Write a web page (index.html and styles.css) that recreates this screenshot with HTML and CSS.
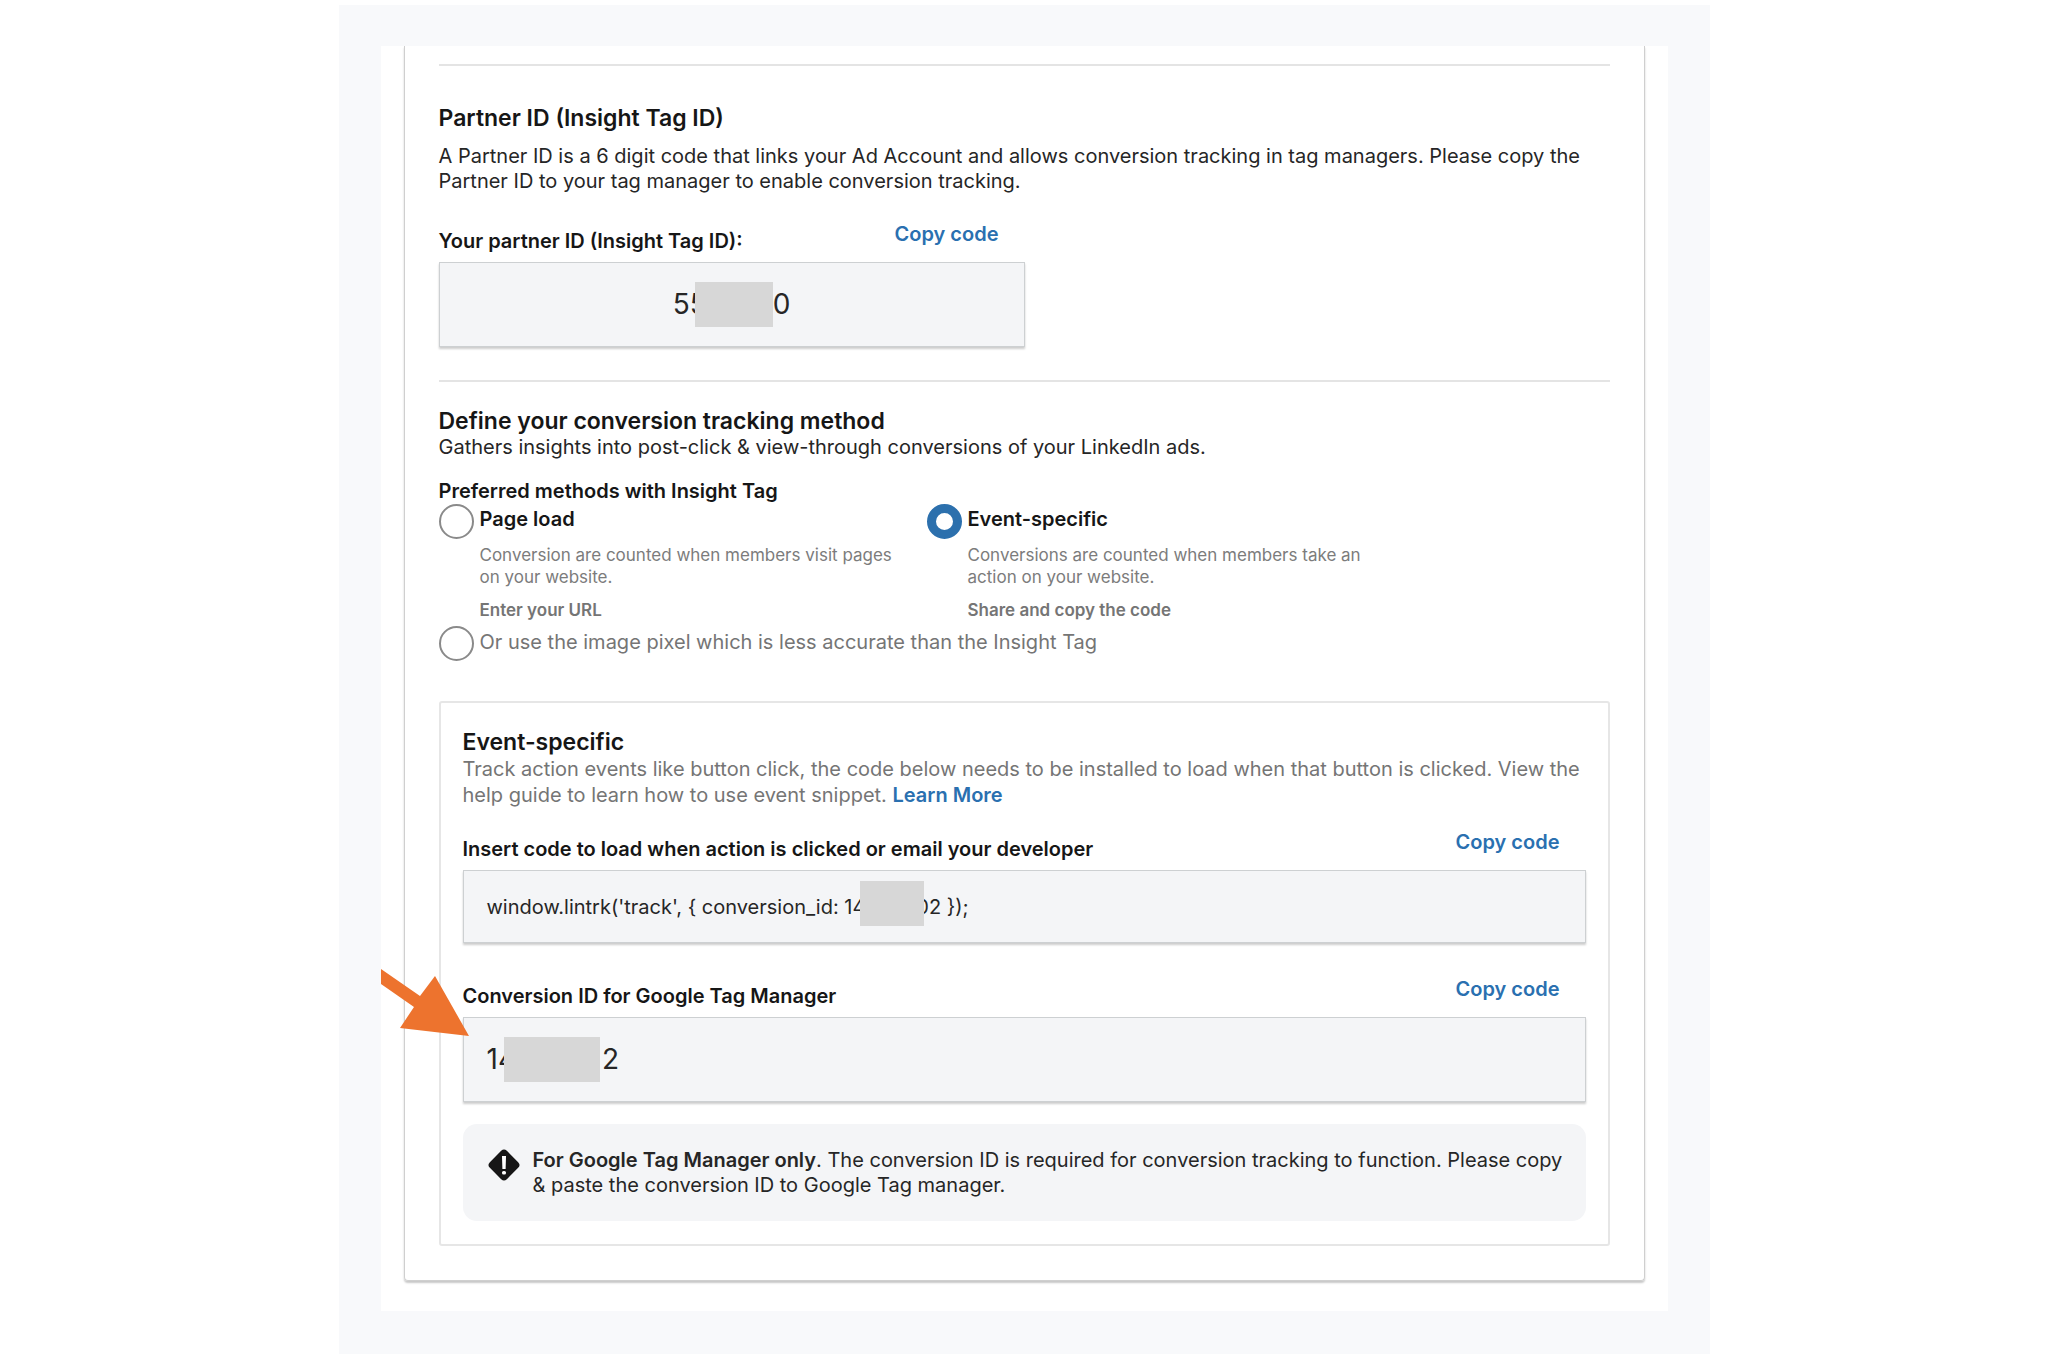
FILE: index.html
```html
<!DOCTYPE html>
<html lang="en">
<head>
<meta charset="utf-8">
<meta name="viewport" content="width=device-width, initial-scale=1">
<title>Insight Tag setup</title>
<link rel="stylesheet" href="styles.css">
</head>
<body>
<main class="stage">
  <div class="sheet">
    <div class="card">
      <section class="partner">
        <h2 class="title">Partner ID (Insight Tag ID)</h2>
        <p class="text">A Partner ID is a 6 digit code that links your Ad Account and allows conversion tracking in tag managers. Please copy the Partner ID to your tag manager to enable conversion tracking.</p>
        <div class="field field-short">
          <div class="field-head">
            <label class="label" for="partner-id">Your partner ID (Insight Tag ID):</label>
            <button class="copy" type="button">Copy code</button>
          </div>
          <output class="value value-large value-center" id="partner-id">55<span class="mask mask-partner"></span>0</output>
        </div>
      </section>

      <section class="method">
        <h2 class="title">Define your conversion tracking method</h2>
        <p class="text">Gathers insights into post-click &amp; view-through conversions of your LinkedIn ads.</p>
        <fieldset class="choices">
          <legend class="label">Preferred methods with Insight Tag</legend>
          <div class="choice">
            <input class="radio" type="radio" name="method" id="page-load">
            <div class="choice-body">
              <label class="label" for="page-load">Page load</label>
              <p class="hint">Conversion are counted when members visit pages on your website.</p>
              <p class="hint hint-strong">Enter your URL</p>
            </div>
          </div>
          <div class="choice">
            <input class="radio" type="radio" name="method" id="event" checked>
            <div class="choice-body">
              <label class="label" for="event">Event-specific</label>
              <p class="hint">Conversions are counted when members take an action on your website.</p>
              <p class="hint hint-strong">Share and copy the code</p>
            </div>
          </div>
          <div class="choice choice-wide">
            <input class="radio" type="radio" name="method" id="pixel">
            <label class="choice-label" for="pixel">Or use the image pixel which is less accurate than the Insight Tag</label>
          </div>
        </fieldset>
      </section>

      <section class="event">
        <h2 class="title">Event-specific</h2>
        <p class="text text-muted">Track action events like button click, the code below needs to be installed to load when that button is clicked. View the help guide to learn how to use event snippet. <a class="link" href="#">Learn More</a></p>
        <div class="field">
          <div class="field-head">
            <label class="label" for="snippet">Insert code to load when action is clicked or email your developer</label>
            <button class="copy" type="button">Copy code</button>
          </div>
          <output class="value" id="snippet">window.lintrk('track', { conversion_id: 14<span class="mask mask-snippet"></span>02 });</output>
        </div>
        <div class="field">
          <div class="field-head">
            <label class="label" for="conversion-id">Conversion ID for Google Tag Manager</label>
            <button class="copy" type="button">Copy code</button>
          </div>
          <output class="value value-large" id="conversion-id">14<span class="mask mask-conversion"></span>2</output>
        </div>
        <aside class="note">
          <svg class="note-icon" viewBox="0 0 34 34" aria-hidden="true">
            <rect x="5" y="5" width="24" height="24" rx="4" transform="rotate(45 17 17)" fill="#161616"/>
            <path d="M15 8h4l-.4 13h-3.2z" fill="#fff"/>
            <rect x="15" y="23" width="4" height="3.6" rx="1.6" fill="#fff"/>
          </svg>
          <p class="text"><strong>For Google Tag Manager only</strong>. The conversion ID is required for conversion tracking to function. Please copy &amp; paste the conversion ID to Google Tag manager.</p>
        </aside>
      </section>
    </div>
    <svg class="arrow" viewBox="0 0 88 68" aria-hidden="true">
      <path d="M0 0 39 27 54 7 88 67 19 59 33 38 0 15z" fill="#ed732e"/>
    </svg>
  </div>
</main>
</body>
</html>
```

FILE: styles.css
```css
* {
  box-sizing: border-box;
}

body {
  margin: 0;
  background: #fff;
  color: #262626;
  font: 20px/25px Inter, "Liberation Sans", sans-serif;
}

h2,
p,
fieldset {
  margin: 0;
}

.stage {
  max-width: 1371px;
  margin: 5px auto;
  padding: 41px 42px 43px;
  background: #f8f9fb;
}

.sheet {
  position: relative;
  padding: 0 23px 30px;
  background: #fff;
}

.card {
  padding: 18px 34px 34px;
  border: 1px solid #cfcfcf;
  border-top: 0;
  border-radius: 0 0 4px 4px;
  box-shadow: 0 2px 2px rgba(0, 0, 0, 0.22);
}

.title {
  font-size: 23px;
  font-weight: 600;
  line-height: 28px;
  color: #161616;
}

.label {
  font-weight: 600;
  color: #161616;
}

.text-muted {
  line-height: 26px;
  color: #757575;
}

.link,
.copy {
  font-weight: 600;
  color: #2a70b0;
  text-decoration: none;
}

.copy {
  padding: 0;
  border: 0;
  background: none;
  font-family: inherit;
  font-size: 20px;
  line-height: 25px;
  cursor: pointer;
}

.partner {
  padding: 38px 0 33px;
  border-top: 2px solid #e4e4e4;
}

.partner .text {
  margin-top: 12px;
}

.partner .field {
  margin-top: 28px;
}

.field {
  margin-top: 22px;
}

.field + .field {
  margin-top: 34px;
}

.field-short {
  max-width: 586px;
}

.field-head {
  display: flex;
  justify-content: space-between;
  height: 32px;
  margin-bottom: 8px;
  padding-right: 26px;
}

.field-head .label {
  align-self: flex-end;
}

.field-head .copy {
  align-self: flex-start;
}

.value {
  display: flex;
  align-items: center;
  padding: 10px 23px 9px;
  border: 1px solid #cdd0d2;
  background: #f4f5f7;
  box-shadow: 0 2px 2px rgba(0, 0, 0, 0.2);
  white-space: pre;
}

.value-large {
  padding: 19px 23px;
  font-size: 28px;
}

.value-center {
  justify-content: center;
}

.mask {
  position: relative;
  height: 45px;
  background: #d7d7d7;
}

.mask-partner {
  width: 78px;
  margin-left: -12px;
}

.mask-snippet {
  width: 64px;
  margin: 0 -8px 7px -5px;
}

.mask-conversion {
  width: 96px;
  margin: 0 2px 0 -12px;
}

.method {
  padding: 25px 0 40px;
  border-top: 2px solid #e4e4e4;
}

.choices {
  display: grid;
  grid-template-columns: 488px 1fr;
  margin-top: 19px;
  padding: 0;
  border: 0;
}

.choices legend {
  padding: 0;
}

.choice {
  display: flex;
  gap: 6px;
}

.choice-wide {
  grid-column: 1 / -1;
  margin-top: 5px;
}

.choice-body {
  max-width: 424px;
  padding-top: 3px;
}

.choice-label {
  padding-top: 4px;
  color: #757575;
}

.radio {
  flex: none;
  appearance: none;
  width: 35px;
  height: 35px;
  margin: 0;
  border: 2px solid #8a8a8a;
  border-radius: 50%;
  background: #fff;
}

.radio:checked {
  border: 9px solid #2c70ad;
}

.hint {
  margin-top: 12px;
  font-size: 17px;
  line-height: 22px;
  color: #7c7c7c;
}

.hint-strong {
  margin-top: 11px;
  font-weight: 600;
  color: #757575;
}

.event {
  padding: 25px 22px 23px;
  border: 2px solid #e6e6e6;
  border-radius: 3px;
}

.note {
  display: flex;
  gap: 12px;
  margin-top: 22px;
  padding: 24px 20px 23px 24px;
  border-radius: 14px;
  background: #f4f5f7;
}

.note strong {
  font-weight: 600;
}

.note-icon {
  flex: none;
  width: 34px;
  height: 34px;
}

.arrow {
  position: absolute;
  top: 923px;
  left: 0;
  width: 88px;
  height: 68px;
}
```
